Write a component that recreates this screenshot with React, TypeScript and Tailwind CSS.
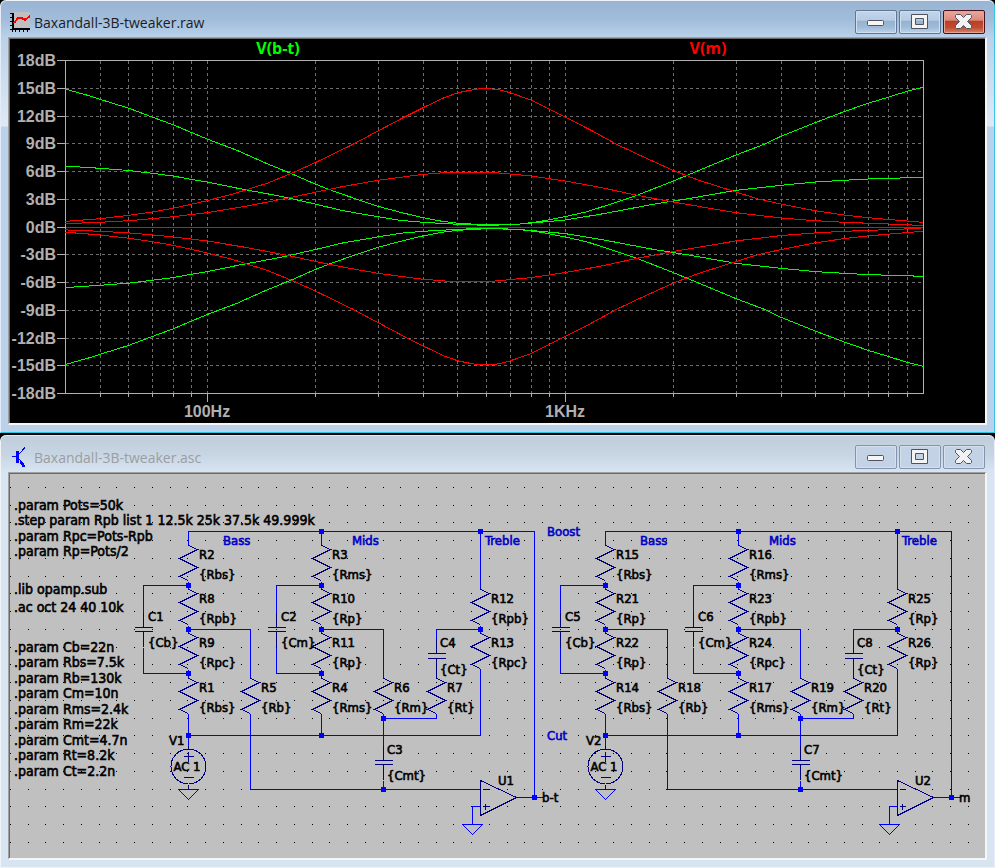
import type { ReactNode } from "react";

type Point = [number, number];

/* ---------- window chrome ---------- */

function PlotIcon() {
  return (
    <svg width="20" height="21" viewBox="0 0 20 21" shapeRendering="crispEdges" aria-hidden="true">
      <rect x="3" y="0" width="17" height="17" fill="#c0c0c0" />
      <path d="M2.5 1V20M1 17.5H20" stroke="#000" strokeWidth="1" fill="none" />
      <path d="M3.5 1V18M2 16.5H20" stroke="#000" strokeWidth="1" fill="none" />
      <path d="M0 1.5H3M0 5.5H3M0 9.5H3M0 13.5H3M0 17.5H3M5.5 17V20M9.5 17V20M13.5 17V20M17.5 17V20" stroke="#000" />
      <path d="M4 11L8 6H12L15 8L20 4" stroke="#f00" strokeWidth="2" fill="none" />
    </svg>
  );
}

function SchematicIcon() {
  return (
    <svg width="20" height="21" viewBox="0 0 20 21" shapeRendering="crispEdges" aria-hidden="true">
      <path d="M2 9.5H6" stroke="#00f" strokeWidth="1" />
      <rect x="6" y="4" width="3" height="12" fill="#00f" />
      <path d="M9 7L15 0.5M9 12L14 18" stroke="#00f" strokeWidth="1" fill="none" />
      <path d="M10 15H13V16H14V18H15V20H12V18H11Z" fill="#00f" />
    </svg>
  );
}

const glyphs: Record<string, ReactNode> = {
  Minimize: <rect x="12.5" y="10.5" width="16" height="5" rx="1" fill="#f6f6f6" stroke="#50525f" />,
  Maximize: (
    <path
      d="M12.5 4.5H28.5V18.5H12.5ZM16.5 8.5V14.5H24.5V8.5Z"
      fill="#f4f4f4"
      fillRule="evenodd"
      stroke="#50525f"
      strokeLinejoin="round"
    />
  ),
  Close: (
    <path
      d="M13.5 4.5H17.5L20.5 7.5L23.5 4.5H27.5L28.5 5.5V7.5L24.5 11.5L28.5 15.5V17.5L27.5 18.5H23.5L20.5 15.5L17.5 18.5H13.5L12.5 17.5V15.5L16.5 11.5L12.5 7.5V5.5Z"
      fill="#f2f2f2"
      stroke="#50525f"
      strokeLinejoin="round"
    />
  ),
};

function CaptionButton({ name, active }: { name: string; active: boolean }) {
  const skin = !active
    ? "border-[#8493b0] bg-[#c3d2e4] shadow-[inset_0_0_0_1px_#d5e0ee]"
    : name === "Close"
      ? "border-[#4a0f1c] bg-[linear-gradient(#e8a99c_0%,#dc8a7c_42%,#b83f26_46%,#c04c30_75%,#d88468_100%)] shadow-[inset_0_0_0_1px_#e3a596]"
      : "border-[#5f7795] bg-[linear-gradient(#c2d5ea_0%,#b6cce4_42%,#97b2cf_46%,#a0bbd8_75%,#bcd4ec_100%)] shadow-[inset_0_0_0_1px_#cfdff0]";
  return (
    <button type="button" aria-label={name} className={`flex h-6 w-[42px] items-center justify-center rounded-xs border ${skin}`}>
      <svg width="42" height="24" viewBox="0 0 42 24" className="shrink-0" aria-hidden="true">
        {glyphs[name]}
      </svg>
    </button>
  );
}

function Window({ title, icon, active, children }: { title: string; icon: ReactNode; active: boolean; children: ReactNode }) {
  const frame = active
    ? "border-l-[#e4edf7] border-r-[#39c6e6] border-b-[#2cc3e0] bg-[linear-gradient(#98b4d2_0px,#a2bdda_20px,#b9d1ea_37px,#dfe9f5_126px,#b9d1ea_127px)]"
    : "border-l-[#f0f4f9] border-r-[#e8eef6] border-b-[#eef3f8] bg-[linear-gradient(#bfcddc_0px,#c8d5e2_20px,#d7e4f2_37px,#d7e4f2_100%)]";
  return (
    <section className={`rounded-t-md border-x border-b ${frame}`}>
      <header className={`flex h-[37px] items-start justify-between rounded-t-md border-t px-[9px] pt-[9px] ${active ? "border-t-[#eef3f9]" : "border-t-[#e6ecf3]"}`}>
        <div className="flex items-center gap-1 pt-0.5">
          {icon}
          <h1 className={`font-["Open_Sans",sans-serif] text-[14px] leading-5 ${active ? "text-[#1c1c24]" : "text-[#9b9da2]"}`}>{title}</h1>
        </div>
        <div className="flex gap-0.5">
          <CaptionButton name="Minimize" active={active} />
          <CaptionButton name="Maximize" active={active} />
          <CaptionButton name="Close" active={active} />
        </div>
      </header>
      <div className="mx-[7px] mb-[7px] border-t border-r-2 border-b-2 border-l border-t-[#a0a0a0] border-r-[#f6f6f6] border-b-[#f6f6f6] border-l-[#a0a0a0]">
        <div className="border-t border-l border-[#696969]">{children}</div>
      </div>
    </section>
  );
}

/* ---------- waveform viewer ---------- */

const left = 65.5;
const right = 923.5;
const decade = 357.8;
const levels: [string, number][] = [
  ["18dB", 60], ["15dB", 88], ["12dB", 116], ["9dB", 143], ["6dB", 171], ["3dB", 199], ["0dB", 227],
  ["-3dB", 254], ["-6dB", 282], ["-9dB", 310], ["-12dB", 338], ["-15dB", 365], ["-18dB", 393],
];
const frequencies = [50, 60, 70, 80, 90, 100, 200, 300, 400, 500, 600, 700, 800, 900, 1000, 2000, 3000, 4000, 5000, 6000, 7000, 8000, 9000];

const greenWide: Point[] = [
  [65, 89], [90, 96], [100, 99.3], [129, 108.3], [152, 117], [173, 124.7], [191, 132.3], [207, 139], [237, 150.3], [267, 163.7],
  [290, 173], [315, 184], [334, 191.3], [357, 199.3], [378, 206.3], [402, 212.7], [423, 217.7], [442, 221.3], [458, 223.3],
  [485, 224.8], [497, 224.8], [520, 224], [540, 221.5], [565, 216.7], [587, 211.7], [610, 204.3], [637, 195.3], [653, 189],
  [665, 184.3], [688, 175], [736, 155], [765, 144], [781, 136.3], [815, 122.7], [844, 111.7], [868, 103.3], [888, 97.3], [907, 91.3], [923, 87.3],
];
const greenNarrow: Point[] = [
  [65, 166], [100, 168.3], [129, 170.5], [152, 173.3], [173, 176], [191, 179.3], [207, 182], [240, 188.7], [283, 196.7],
  [315, 204], [343, 210.7], [378, 216.7], [400, 220.3], [423, 222.3], [458, 224.3], [487, 225.4], [500, 225], [520, 224], [540, 222.3],
  [565, 220], [600, 214.3], [623, 210], [653, 204.3], [688, 198.7], [736, 190.3], [781, 185.3], [815, 182], [844, 180.3], [868, 179], [907, 177.8], [923, 177.3],
];
const redWide: Point[] = [
  [65, 221.4], [100, 218.7], [129, 215.3], [152, 212], [173, 208.3], [191, 204.3], [207, 200.7], [233, 194], [267, 183.3],
  [293, 172.7], [315, 162.7], [329, 156], [353, 144.3], [378, 131], [403, 117.7], [423, 107.7], [445, 97.3], [458, 92.7],
  [470, 90.3], [480, 88.7], [490, 88.7], [500, 90], [510, 92.7], [531, 100], [549, 109], [565, 117], [593, 131.3], [616, 144],
  [637, 154], [673, 170.3], [698, 180], [736, 192], [758, 199], [781, 204], [815, 210.7], [844, 215], [868, 217.7], [907, 221], [923, 222.3],
];
const redNarrow: Point[] = [
  [65, 223.7], [100, 222.3], [129, 220.7], [152, 218.7], [173, 216.7], [207, 212.7], [247, 206], [287, 198.3], [315, 192.3],
  [342, 186.7], [378, 180.3], [420, 174.7], [447, 172.4], [493, 172.4], [531, 176], [565, 181], [600, 187.3], [637, 195.3],
  [673, 202], [736, 212.7], [781, 218], [815, 220.7], [844, 222.3], [907, 224.7], [923, 225.7],
];

/* Boost and cut responses are symmetric about the 0dB line. */
function Trace({ points, color }: { points: Point[]; color: string }) {
  const boost = points.map(([x, y]) => `${x},${y}`).join(" ");
  const cut = points.map(([x, y]) => `${x},${453.6 - y}`).join(" ");
  return (
    <g fill="none" stroke={color} shapeRendering="crispEdges">
      <polyline points={boost} />
      <polyline points={cut} />
    </g>
  );
}

function Waveform() {
  const gridX = frequencies.map((f) => Math.round(left - 0.5 + decade * Math.log10(f / 40)) + 0.5);
  return (
    <svg viewBox="10 39 975 384" className="block h-auto w-full overflow-visible bg-black" role="img" aria-label="Frequency response">
      <g stroke="#6c6c6c" strokeDasharray="3 3" shapeRendering="crispEdges">
        {gridX.map((x) => <line key={x} x1={x} x2={x} y1="61" y2="393" />)}
        {levels.slice(1, -1).map(([name, y]) => <line key={name} x1={left} x2={right} y1={y + 0.5} y2={y + 0.5} />)}
      </g>
      <g stroke="#b0b0b0" fill="none" shapeRendering="crispEdges">
        <rect x={left} y="60.5" width={right - left} height="333" />
        {levels.map(([name, y]) => <line key={name} x1="57" x2="65" y1={y + 0.5} y2={y + 0.5} />)}
        {gridX.map((x, i) => (
          <line key={x} x1={x} x2={x} y1="394" y2={frequencies[i] === 100 || frequencies[i] === 1000 ? 402 : 397} />
        ))}
      </g>
      <Trace points={greenWide} color="#00ff00" />
      <Trace points={greenNarrow} color="#00ff00" />
      <line x1="66" x2="923" y1="227.5" y2="227.5" stroke="#ff0000" shapeRendering="crispEdges" />
      <Trace points={redWide} color="#ff0000" />
      <Trace points={redNarrow} color="#ff0000" />
      <g className='fill-[#b0b0b0] font-["Liberation_Sans",Arial,sans-serif] text-[16px] font-bold'>
        {levels.map(([name, y]) => <text key={name} x="56" y={y + 6} textAnchor="end">{name}</text>)}
        <text x="207" y="417" textAnchor="middle">100Hz</text>
        <text x="565" y="417" textAnchor="middle">1KHz</text>
      </g>
      <g className='font-["Open_Sans",sans-serif] text-[16px] font-bold'>
        <text x="278" y="54" textAnchor="middle" fill="#00ff00">V(b-t)</text>
        <text x="708" y="54" textAnchor="middle" fill="#ff0000">V(m)</text>
      </g>
    </svg>
  );
}

/* ---------- schematic ---------- */

const wire = "#0000ff";
const symbol = "#000080";

const resistors: Point[] = [
  [188, 545], [188, 589], [188, 633], [188, 678], [321, 545], [321, 589], [321, 633], [321, 678],
  [480, 589], [480, 633], [250, 678], [383, 678], [436, 678],
];
const capacitors: [number, number, number][] = [[143, 627, 4], [276, 627, 4], [436, 653, 5], [383, 760, 4]];
const junctions: Point[] = [
  [321, 531], [480, 531], [188, 585], [321, 585], [188, 629], [321, 629], [480, 629], [188, 673], [321, 673],
  [383, 718], [188, 735], [321, 735], [383, 789], [534, 797],
];
const wires = [
  "M188 545V531H534V797", "M321 531V545", "M480 531V589", "M188 581V589M188 625V633M188 669V678M321 581V589M321 625V633M321 669V678M480 625V633",
  "M143 612V585H188", "M143 647V673H188", "M276 612V585H321", "M276 647V673H321", "M188 629H250V678", "M250 713V789H480",
  "M321 629H383V678", "M383 713V745", "M436 713V718H383", "M480 629H436V638", "M480 668V735H188", "M188 713V749",
  "M321 713V735", "M383 780V789", "M188 789H198L188 799L178 789H188", "M480 806H472V824H482L472 834L462 824H472", "M516 797H543",
];

/* Reference designator and value, with the x and the two baselines they sit on. */
const partSpots: [number, number, number][] = [
  [199, 559, 579], [199, 603, 623], [199, 647, 667], [199, 692, 712],
  [332, 559, 579], [332, 603, 623], [332, 647, 667], [332, 692, 712],
  [491, 603, 623], [491, 647, 667], [261, 692, 712], [394, 692, 712], [447, 692, 712],
  [148, 621, 647], [281, 621, 647], [440, 647, 674], [387, 754, 780],
];

interface CircuitProps {
  shift: number;
  parts: [string, string][];
  source: string;
  opamp: string;
  output: string;
}

function Circuit({ shift, parts, source, opamp, output }: CircuitProps) {
  return (
    <g transform={`translate(${shift} 0)`}>
      <g transform="translate(0.5 0.5)" fill="none" shapeRendering="crispEdges">
        <path d={wires.join("")} stroke={wire} />
        <g stroke={symbol}>
          {resistors.map(([x, y]) => <path key={`${x}-${y}`} d={`M${x} ${y}l9 4l-18 9l18 9l-18 9l9 4`} />)}
          {capacitors.map(([x, y, gap]) => (
            <path key={x} d={`M${x - 9} ${y}h18M${x - 9} ${y + gap}h18M${x} ${y}V${y - 15}M${x} ${y + gap}v15`} />
          ))}
          <circle cx="188" cy="766" r="17.5" />
          <path d="M188 745V749M188 784V789M183 756H193M188 751V761M183 777H193" />
          <path d="M480 780L516 797L480 815ZM482 789H488M482 806H488M485 803V809M436 673V678" />
        </g>
        <g fill={wire}>
          {junctions.map(([x, y]) => <rect key={`${x}-${y}`} x={x - 2.5} y={y - 2.5} width="5" height="5" />)}
        </g>
      </g>
      <g className="fill-black stroke-black stroke-[0.6px]">
        {parts.map(([name, value], i) => {
          const [x, top, bottom] = partSpots[i];
          return (
            <g key={name}>
              <text x={x} y={top}>{name}</text>
              <text x={x} y={bottom}>{value}</text>
            </g>
          );
        })}
        <text x="169" y="745">{source}</text>
        <text x="187" y="771" textAnchor="middle">AC 1</text>
        <text x="498" y="785">{opamp}</text>
        <text x="542" y="802">{output}</text>
      </g>
      <g className="fill-[#0000c8] stroke-[#0000c8] stroke-[0.6px]">
        <text x="223" y="545">Bass</text>
        <text x="352" y="545">Mids</text>
        <text x="485" y="545">Treble</text>
      </g>
    </g>
  );
}

const leftParts: [string, string][] = [
  ["R2", "{Rbs}"], ["R8", "{Rpb}"], ["R9", "{Rpc}"], ["R1", "{Rbs}"], ["R3", "{Rms}"], ["R10", "{Rp}"], ["R11", "{Rp}"], ["R4", "{Rms}"],
  ["R12", "{Rpb}"], ["R13", "{Rpc}"], ["R5", "{Rb}"], ["R6", "{Rm}"], ["R7", "{Rt}"], ["C1", "{Cb}"], ["C2", "{Cm}"], ["C4", "{Ct}"], ["C3", "{Cmt}"],
];
const rightParts: [string, string][] = [
  ["R15", "{Rbs}"], ["R21", "{Rp}"], ["R22", "{Rp}"], ["R14", "{Rbs}"], ["R16", "{Rms}"], ["R23", "{Rpb}"], ["R24", "{Rpc}"], ["R17", "{Rms}"],
  ["R25", "{Rp}"], ["R26", "{Rp}"], ["R18", "{Rb}"], ["R19", "{Rm}"], ["R20", "{Rt}"], ["C5", "{Cb}"], ["C6", "{Cm}"], ["C8", "{Ct}"], ["C7", "{Cmt}"],
];

const directives: [number, string][] = [
  [510, ".param Pots=50k"], [525, ".step param Rpb list 1 12.5k 25k 37.5k 49.999k"], [541, ".param Rpc=Pots-Rpb"], [556, ".param Rp=Pots/2"],
  [594, ".lib opamp.sub"], [612, ".ac oct 24 40 10k"],
  [652, ".param Cb=22n"], [667, ".param Rbs=7.5k"], [683, ".param Rb=130k"], [698, ".param Cm=10n"], [714, ".param Rms=2.4k"],
  [729, ".param Rm=22k"], [745, ".param Cmt=4.7n"], [760, ".param Rt=8.2k"], [776, ".param Ct=2.2n"],
];

const pitch = 17.74;
const dots = Array.from({ length: 21 }, (_, row) =>
  Array.from({ length: 55 }, (_, col) => `M${Math.round(10 + col * pitch)} ${Math.round(487 + row * pitch)}h1v1h-1z`).join(""),
).join("");

function Schematic() {
  return (
    <svg
      viewBox="10 474 975 384"
      className='block h-auto w-full bg-[#c0c0c0] font-["DejaVu_Sans_Condensed","DejaVu_Sans",sans-serif] text-[13px]'
      role="img"
      aria-label="Baxandall tone control schematic"
    >
      <path d={dots} fill="#000" shapeRendering="crispEdges" />
      <g className="fill-black stroke-black stroke-[0.6px] text-[14px]">
        {directives.map(([y, line]) => <text key={y} x="14" y={y}>{line}</text>)}
      </g>
      <Circuit shift={0} parts={leftParts} source="V1" opamp="U1" output="b-t" />
      <Circuit shift={417} parts={rightParts} source="V2" opamp="U2" output="m" />
      <g className="fill-[#0000c8] stroke-[#0000c8] stroke-[0.6px]">
        <text x="547" y="536">Boost</text>
        <text x="547" y="740">Cut</text>
      </g>
    </svg>
  );
}

export default function App() {
  return (
    <main className="flex flex-col gap-0.5 bg-black">
      <Window title="Baxandall-3B-tweaker.raw" icon={<PlotIcon />} active>
        <Waveform />
      </Window>
      <Window title="Baxandall-3B-tweaker.asc" icon={<SchematicIcon />} active={false}>
        <Schematic />
      </Window>
    </main>
  );
}
